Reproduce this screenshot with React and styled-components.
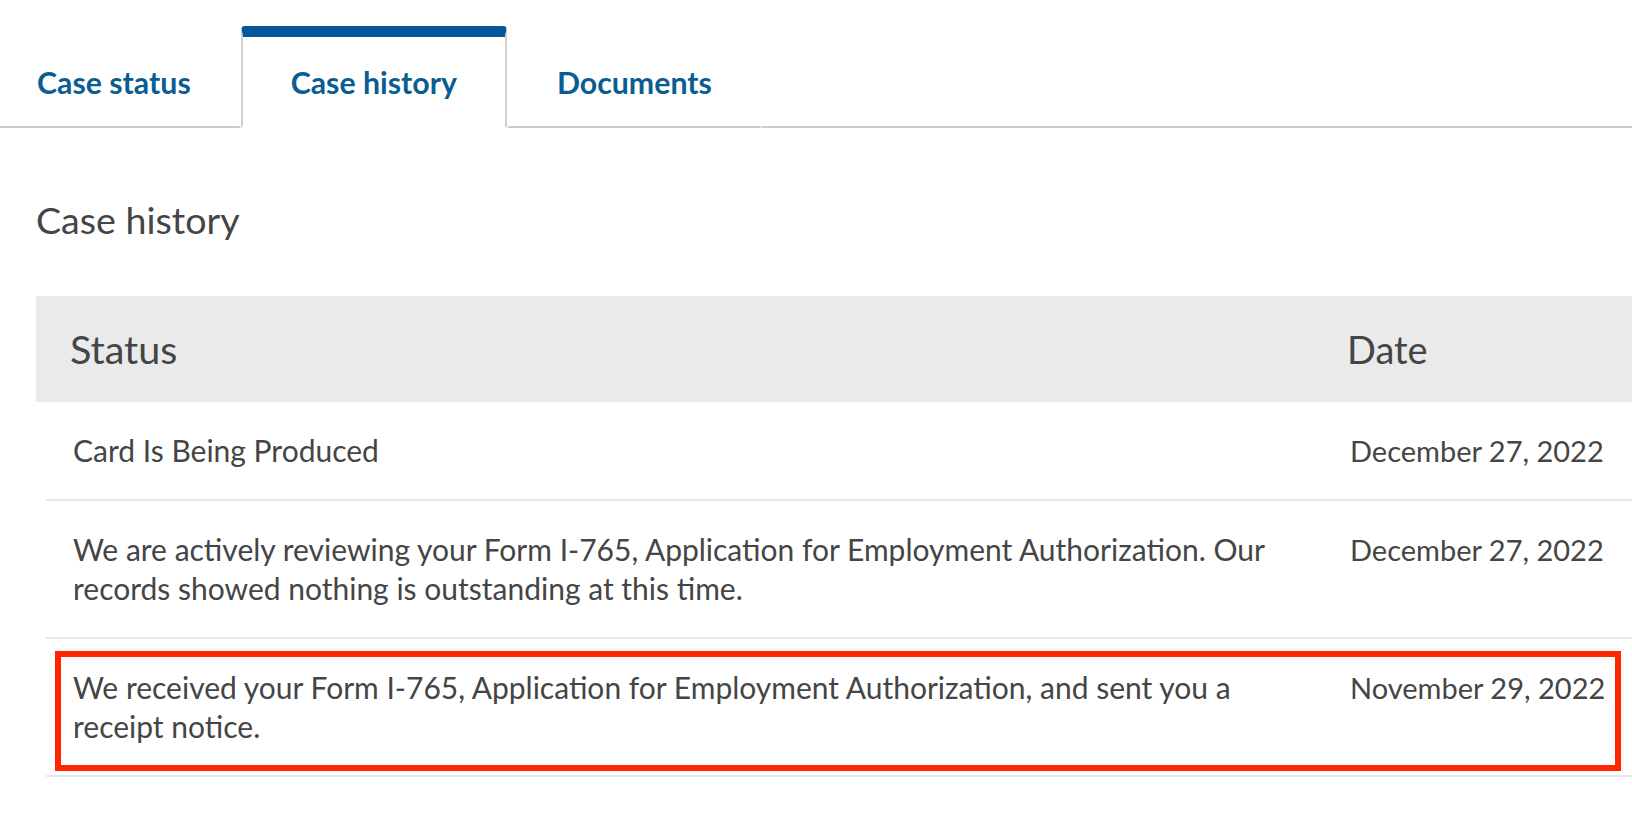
import React from "react";
import styled, { createGlobalStyle } from "styled-components";

const tabs = ["Case status", "Case history", "Documents"];

const rows = [
  { status: "Card Is Being Produced", date: "December 27, 2022" },
  {
    status:
      "We are actively reviewing your Form I-765, Application for Employment Authorization. Our records showed nothing is outstanding at this time.",
    date: "December 27, 2022",
  },
  {
    status:
      "We received your Form I-765, Application for Employment Authorization, and sent you a receipt notice.",
    date: "November 29, 2022",
    marked: true,
  },
];

const App = () => {
  return (
    <React.Fragment>
      <GlobalStyle />
      <Page>
        <TabBar>
          {tabs.map((t) => (
            <Tab key={t} $active={t === "Case history"}>
              {t}
            </Tab>
          ))}
        </TabBar>
        <Content>
          <Title>Case history</Title>
          <Table>
            <HeadRow>
              <HeadCell>Status</HeadCell>
              <HeadCell $date>Date</HeadCell>
            </HeadRow>
            {rows.map((r, i) => (
              <Row key={i}>
                <StatusCell>{r.status}</StatusCell>
                <DateCell>{r.date}</DateCell>
                {r.marked && <Marker />}
              </Row>
            ))}
          </Table>
        </Content>
      </Page>
    </React.Fragment>
  );
};

export default App;

const GlobalStyle = createGlobalStyle`
  body {
    margin: 0;
    background: #ffffff;
    font-family: Lato, "Open Sans", sans-serif;
    color: #454545;
  }
`;

const Page = styled.div`
  width: 1632px;
  overflow: hidden;
`;

const TabBar = styled.div`
  display: flex;
  padding-top: 26px;
  border-bottom: 2px solid #cbcbcb;
`;

const Tab = styled.div`
  box-sizing: border-box;
  height: 102px;
  margin-bottom: -2px;
  display: flex;
  align-items: center;
  padding: 0 48px;
  font-size: 30.3px;
  font-weight: 700;
  color: #0a5d92;
  background: #ffffff;
  border-top: 11px solid ${(p) => (p.$active ? "#04569a" : "transparent")};
  border-left: 2px solid ${(p) => (p.$active ? "#cfcfcf" : "transparent")};
  border-right: 2px solid ${(p) => (p.$active ? "#cfcfcf" : "transparent")};
  border-bottom: 2px solid ${(p) => (p.$active ? "#ffffff" : "#cbcbcb")};
  border-radius: 4px 4px 0 0;
  &:first-child {
    padding-left: 37px;
    border-left: none;
  }
`;

const Content = styled.div`
  padding-left: 36px;
`;

const Title = styled.h2`
  margin: 70px 0 54px;
  font-size: 37.6px;
  font-weight: 400;
  line-height: 44px;
  color: #454545;
`;

const Table = styled.div`
  display: flex;
  flex-direction: column;
`;

const HeadRow = styled.div`
  display: grid;
  grid-template-columns: 1fr 285px;
  align-items: center;
  height: 106px;
  padding-left: 34px;
  background: #eaeaea;
`;

const HeadCell = styled.div`
  font-size: ${(p) => (p.$date ? "38px" : "39.5px")};
  line-height: 46px;
  color: #454545;
`;

const Row = styled.div`
  position: relative;
  display: grid;
  grid-template-columns: 1fr 282px;
  margin-left: 10px;
  padding: 29px 0 28px 27px;
  border-bottom: 2px solid #e7e7e7;
  line-height: 39.5px;
  color: #454545;
`;

const StatusCell = styled.div`
  padding-right: 50px;
  font-size: 30px;
`;

const DateCell = styled.div`
  white-space: nowrap;
  font-size: 29px;
`;

const Marker = styled.div`
  position: absolute;
  top: 12px;
  bottom: 4px;
  left: 9px;
  right: 11px;
  border: 6px solid #ff2600;
`;
